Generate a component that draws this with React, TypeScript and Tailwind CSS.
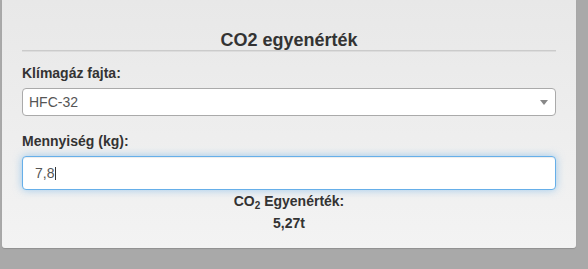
export default function App() {
  return (
    <div className="h-[269px] w-[588px] bg-[#a9a9a9] pl-[2px] font-['Liberation_Sans',Arial,sans-serif]">
      <div className="h-[248px] w-[574px] rounded-b-[3px] bg-gradient-to-b from-[#e8e8e8] to-[#f3f3f3] px-[20px] pt-[30px] shadow-[0_1px_1px_rgba(0,0,0,0.15)]">
        {/* Title */}
        <h3 className="border-b border-[#cbcbcb] text-center text-[18px] font-bold leading-[20px] text-[#333] shadow-[0_1px_0_#dcdcdc]">
          CO2 egyenérték
        </h3>

        {/* Gas type */}
        <div className="mt-[12px]">
          <label className="block text-[14px] font-bold leading-[20px] text-[#333]">Klímagáz fajta:</label>
          <div className="mt-[5px] flex h-[28px] items-center justify-between rounded-[4px] border border-[#aaa] bg-white pl-[6px] pr-[7px]">
            <span className="text-[14px] text-[#555]">HFC-32</span>
            <svg width="8" height="5" viewBox="0 0 8 5">
              <path d="M0 0h8L4 5z" fill="#888" />
            </svg>
          </div>
        </div>

        {/* Amount */}
        <div className="mt-[15px]">
          <label className="block text-[14px] font-bold leading-[20px] text-[#333]">Mennyiség (kg):</label>
          <div className="mt-[5px] flex h-[34px] items-center rounded-[4px] border border-[#66afe9] bg-white px-[12px] shadow-[inset_0_1px_1px_rgba(0,0,0,0.075),0_0_8px_rgba(102,175,233,0.6)]">
            <span className="text-[14px] text-[#555]">7,8</span>
            <span className="ml-px h-[13px] w-px bg-[#333]" />
          </div>
        </div>

        {/* Result */}
        <div className="text-center text-[14px] font-bold leading-[22px] text-[#333]">
          <div>
            CO<sub className="text-[10px]">2</sub> Egyenérték:
          </div>
          <div>5,27t</div>
        </div>
      </div>
    </div>
  );
}
